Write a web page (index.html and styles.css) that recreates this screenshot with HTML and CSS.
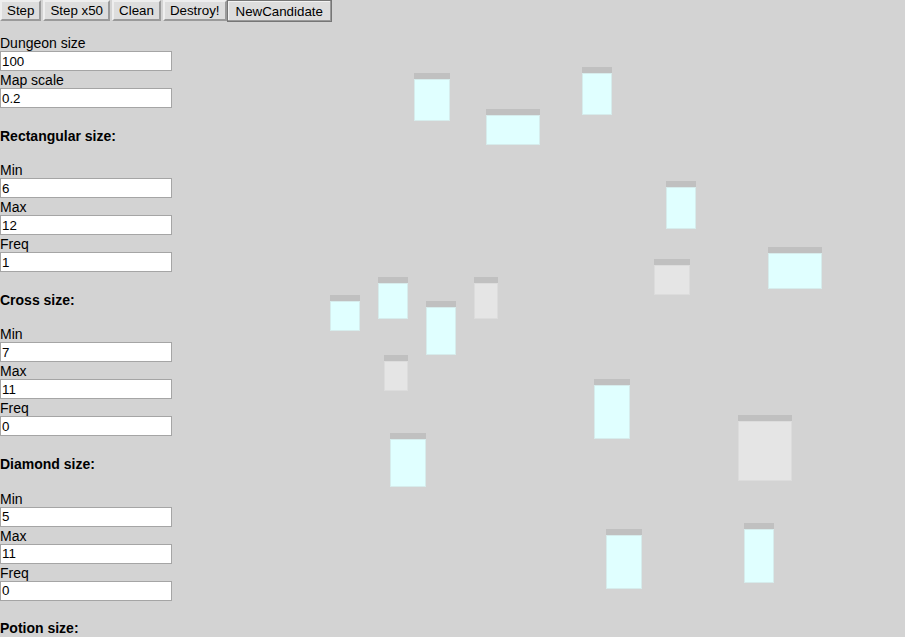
FILE: index.html
```html
<!DOCTYPE html>
<html>
<head>
<meta charset="utf-8">
<link rel="stylesheet" href="styles.css">
</head>
<body>
<div class="toolbar">
  <button class="btn">Step</button>
  <button class="btn">Step x50</button>
  <button class="btn">Clean</button>
  <button class="btn">Destroy!</button>
  <button class="btn btn-active">NewCandidate</button>
</div>
<div class="panel">
  <label class="lbl">Dungeon size</label>
  <input class="field" value="100">
  <label class="lbl">Map scale</label>
  <input class="field" value="0.2">

  <h4 class="sect">Rectangular size:</h4>
  <label class="lbl">Min</label>
  <input class="field" value="6">
  <label class="lbl">Max</label>
  <input class="field" value="12">
  <label class="lbl">Freq</label>
  <input class="field" value="1">

  <h4 class="sect">Cross size:</h4>
  <label class="lbl">Min</label>
  <input class="field" value="7">
  <label class="lbl">Max</label>
  <input class="field" value="11">
  <label class="lbl">Freq</label>
  <input class="field" value="0">

  <h4 class="sect">Diamond size:</h4>
  <label class="lbl">Min</label>
  <input class="field" value="5">
  <label class="lbl">Max</label>
  <input class="field" value="11">
  <label class="lbl">Freq</label>
  <input class="field" value="0">

  <h4 class="sect">Potion size:</h4>
</div>

<div class="map">
  <div class="room" style="left:414px;top:73px;width:36px;height:48px"></div>
  <div class="room" style="left:486px;top:109px;width:54px;height:36px"></div>
  <div class="room" style="left:582px;top:67px;width:30px;height:48px"></div>
  <div class="room" style="left:666px;top:181px;width:30px;height:48px"></div>
  <div class="room room-gray" style="left:654px;top:259px;width:36px;height:36px"></div>
  <div class="room" style="left:768px;top:247px;width:54px;height:42px"></div>
  <div class="room" style="left:330px;top:295px;width:30px;height:36px"></div>
  <div class="room" style="left:378px;top:277px;width:30px;height:42px"></div>
  <div class="room" style="left:426px;top:301px;width:30px;height:54px"></div>
  <div class="room room-gray" style="left:474px;top:277px;width:24px;height:42px"></div>
  <div class="room room-gray" style="left:384px;top:355px;width:24px;height:36px"></div>
  <div class="room" style="left:594px;top:379px;width:36px;height:60px"></div>
  <div class="room room-gray" style="left:738px;top:415px;width:54px;height:66px"></div>
  <div class="room" style="left:390px;top:433px;width:36px;height:54px"></div>
  <div class="room" style="left:606px;top:529px;width:36px;height:60px"></div>
  <div class="room" style="left:744px;top:523px;width:30px;height:60px"></div>
</div>
</body>
</html>
```

FILE: styles.css
```css
html, body {
  margin: 0;
  padding: 0;
}
body {
  background: #d3d3d3;
  font-family: "Liberation Sans", Arial, sans-serif;
  font-size: 14px;
  color: #000;
  position: relative;
  height: 637px;
  overflow: hidden;
}
.toolbar {
  display: flex;
  gap: 2px;
  height: 21px;
}
.btn {
  font-family: "Liberation Sans", Arial, sans-serif;
  font-size: 13.33px;
  color: #000;
  background: #dddddd;
  border: 2px outset #eeeeee;
  padding: 1px 5px;
  height: 21px;
  line-height: 15px;
  margin: 0;
}
.btn-active {
  border: 1px solid #767676;
  box-shadow: inset -1px -1px 0 #9a9a9a, inset 1px 1px 0 #f2f2f2;
  padding: 1px 8px;
  height: 22px;
  margin-left: -2px;
}
.panel {
  padding-top: 13px;
  width: 172px;
  display: flex;
  flex-direction: column;
  align-items: flex-start;
}
.lbl {
  display: block;
  box-sizing: border-box;
  padding-top: 1px;
  line-height: 16px;
  height: 17px;
}
.field {
  box-sizing: border-box;
  width: 172px;
  height: 20px;
  margin: 0;
  padding: 1px 1px;
  border: 1px solid #a5a5a5;
  background: #fff;
  font-family: "Liberation Sans", Arial, sans-serif;
  font-size: 13.33px;
  color: #000;
}
.sect {
  margin: 19.6px 0 17.6px;
  font-size: 14px;
  line-height: 16px;
  font-weight: bold;
}
.map {
  position: absolute;
  left: 0;
  top: 0;
  width: 905px;
  height: 637px;
  pointer-events: none;
}
.room {
  position: absolute;
  box-sizing: border-box;
  background: #e0ffff;
  border-top: 6px solid #c0c0c0;
  box-shadow: inset 0 0 0 1px #d6ecec;
}
.room-gray {
  background: #e5e5e5;
  box-shadow: inset 0 0 0 1px #dcdcdc;
}
```
